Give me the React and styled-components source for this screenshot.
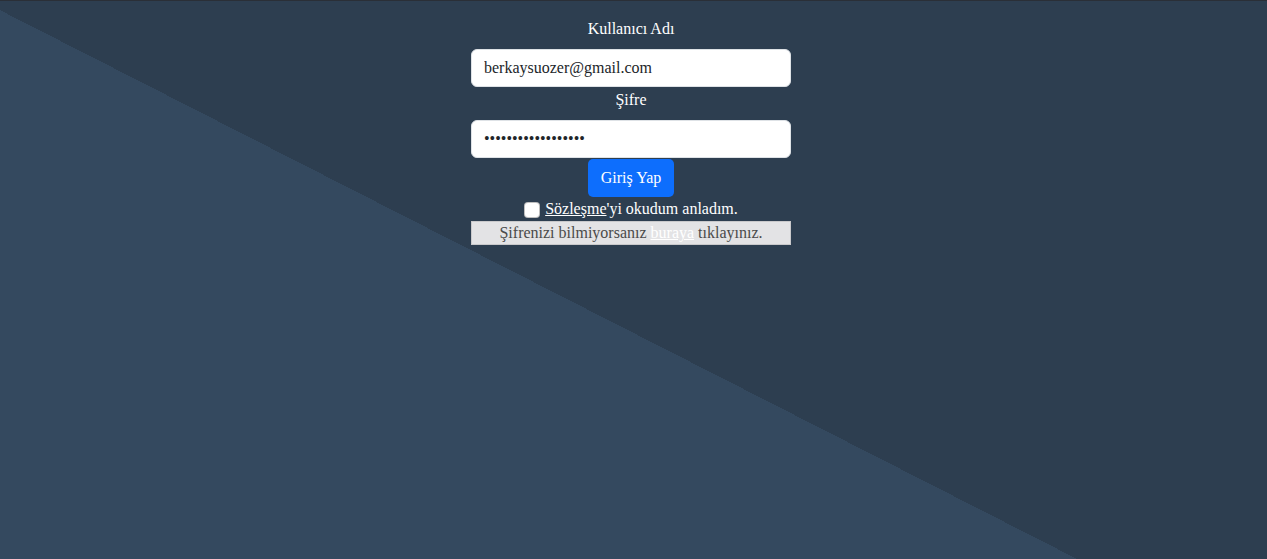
import styled, { createGlobalStyle } from "styled-components";

const GlobalStyle = createGlobalStyle`
  html, body {
    margin: 0;
    padding: 0;
  }
  body {
    font-family: "Liberation Serif", "Times New Roman", serif;
    font-size: 16px;
  }
`;

const Page = styled.div`
  box-sizing: border-box;
  min-height: 100vh;
  border-top: 1px solid #2a2f37;
  background: linear-gradient(207deg, #2d3e50 54.4%, #34495f 54.4%);
  display: flex;
  justify-content: center;
  padding: 15px 5px 0 0;
`;

const Form = styled.form`
  width: 320px;
  display: flex;
  flex-direction: column;
  align-items: center;
`;

const Label = styled.label`
  color: #ffffff;
  line-height: 24px;
  margin: 1px 0 8px;
`;

const Input = styled.input`
  box-sizing: border-box;
  width: 100%;
  height: 38px;
  padding: 6px 12px;
  border: 1px solid #dee2e6;
  border-radius: 6px;
  background: #ffffff;
  color: #212529;
  font-family: inherit;
  font-size: 16px;
  outline: none;
`;

const Button = styled.button`
  margin-top: 1px;
  height: 38px;
  padding: 6px 13px;
  border: none;
  border-radius: 5px;
  background: #0d6efd;
  color: #ffffff;
  font-family: inherit;
  font-size: 16px;
  cursor: pointer;
`;

const CheckRow = styled.div`
  display: flex;
  align-items: center;
  line-height: 24px;
  color: #ffffff;
`;

const Check = styled.input`
  appearance: none;
  width: 16px;
  height: 16px;
  margin: 1px 5px 0 0;
  border: 1px solid rgba(0, 0, 0, 0.25);
  border-radius: 4px;
  background: #ffffff;
`;

const Link = styled.a`
  color: #ffffff;
  text-decoration: underline;
`;

const Note = styled.div`
  box-sizing: border-box;
  width: 100%;
  height: 24px;
  line-height: 22px;
  text-align: center;
  background: #e3e3e5;
  border: 1px solid #c9c9cb;
  color: #4a4a4a;
`;

export default function App() {
  return (
    <>
      <GlobalStyle />
      <Page>
        <Form onSubmit={(e) => e.preventDefault()}>
          <Label htmlFor="user">Kullanıcı Adı</Label>
          <Input id="user" type="text" defaultValue="berkaysuozer@gmail.com" />
          <Label htmlFor="pass">Şifre</Label>
          <Input id="pass" type="password" defaultValue="123456789012345678" />
          <Button type="submit">Giriş Yap</Button>
          <CheckRow>
            <Check type="checkbox" />
            <span>
              <Link href="#">Sözleşme</Link>'yi okudum anladım.
            </span>
          </CheckRow>
          <Note>
            Şifrenizi bilmiyorsanız <Link href="#">buraya</Link> tıklayınız.
          </Note>
        </Form>
      </Page>
    </>
  );
}
